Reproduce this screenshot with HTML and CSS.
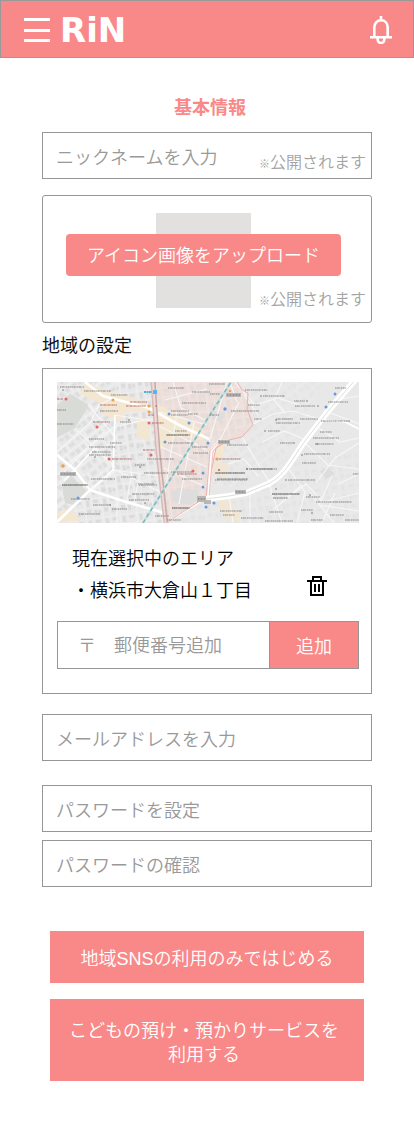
FILE: index.html
```html
<!DOCTYPE html>
<html lang="ja">
<head>
<meta charset="utf-8">
<meta name="viewport" content="width=device-width, initial-scale=1">
<title>RiN 基本情報</title>
<link rel="stylesheet" href="styles.css">
</head>
<body>
<header class="header">
  <div class="header-left">
    <button class="icon-button" type="button" aria-label="メニュー">
      <svg width="26" height="24" viewBox="0 0 26 24" fill="#fff"><path d="M0 0h26v3H0zM0 11h26v3H0zM0 21h26v3H0z"/></svg>
    </button>
    <a class="logo" href="#">RiN</a>
  </div>
  <button class="icon-button" type="button" aria-label="お知らせ">
    <svg width="22" height="28" viewBox="0 0 22 28" fill="none" stroke="#fff" stroke-width="2.6"><path d="M11 0v4M4.3 20.5v-9c0-4.2 2.8-7.2 6.7-7.2s6.7 3 6.7 7.2v9M0 21.3h22M7.7 22v1.7a3.3 3.3 0 0 0 6.6 0V22"/></svg>
  </button>
</header>
<main class="main">
  <h1 class="title">基本情報</h1>
  <form class="form">
    <div class="field">
      <input class="input" type="text" aria-label="ニックネーム" placeholder="ニックネームを入力">
      <span class="note"><span class="mark">※</span>公開されます</span>
    </div>
    <div class="upload">
      <div class="avatar"></div>
      <button class="upload-button" type="button">アイコン画像をアップロード</button>
      <span class="note upload-note"><span class="mark">※</span>公開されます</span>
    </div>
    <h2 class="subtitle">地域の設定</h2>
    <section class="area">
      <svg class="map" viewBox="0 0 302 141" preserveAspectRatio="xMidYMid slice" role="img" aria-label="大倉山周辺の地図">
        <defs>
          <pattern id="blocksA" width="22" height="18" patternUnits="userSpaceOnUse" patternTransform="rotate(-38)">
            <path d="M0 0h22M0 9h22M0 0v18M12 0v9M7 9v9" stroke="#f4f4f4" stroke-width="1" fill="none"/>
            <path d="M2 2h3v3H2zM7 2h3v5H7zM14 3h6v3h-6zM1 11h4v4H1zM10 11h4v3h-4zM16 11h4v5h-4z" fill="#dedede"/>
          </pattern>
          <pattern id="blocksB" width="17" height="20" patternUnits="userSpaceOnUse" patternTransform="rotate(-8)">
            <path d="M0 0h17M0 10h10M0 0v20M10 0v20" stroke="#f4f2f1" stroke-width="1" fill="none"/>
            <path d="M2 2h5v3H2zM12 2h3v6h-3zM2 12h3v5H2zM6 13h3v3H6zM12 11h4v4h-4z" fill="#dbdbdb"/>
          </pattern>
        </defs>
        <path fill="#e8e8e8" d="M0 0h302v141H0z"/>
        <path fill="url(#blocksA)" d="M0 0h60v90l-60 51z"/>
        <path fill="url(#blocksB)" d="M60 0h40l10 141H0l56-53z"/>
        <path fill="#eddeda" d="M94 0h86l12 14 4 28-12 14-14 2-10 8-10 50-39 25-10-50z"/>
        <path fill="url(#blocksB)" opacity=".5" d="M96 0h84l14 40-34 26-10 50-39 25z"/>
        <path fill="url(#blocksA)" opacity=".35" d="M186 0h80l-40 80-40 25h-30l5-40 30-12z"/>
        <path fill="url(#blocksB)" opacity=".3" d="M151 117l64-14 25-30h62v68H110z"/>
        <path fill="#f3e7d1" d="M29 0l18 8 30 8 16 6v8l-24-1-5 10-17-6-4-12-20-9zM96 20l22 11 30 18-3 10-24-5-19 14-4-22zM81 35l12 5v20l-14-6zM157 65l11-4-2 14-9 2zM0 130l14-3 10 12H2z"/>
        <path fill="#f1e6d4" d="M154 82l10-3 8 6-3 10-15-2zM160 118l16 2v12l-12-1zM170 127l14 3-2 10-17-4z"/>
        <path fill="#d9dbd7" d="M0 23l13-11 19 11-14 23-18 10zM5 104l9-10 17 16-13 13-10-2z"/>
        <path fill="#dddddd" d="M114 111l7-5 20 2 2 8-10 7-16-3zM158 29l10 4-4 7-9-3zM263 89l8-4 7 7-9 5z"/>
        <g fill="none" stroke="#f6f6f6" stroke-width="1.2">
          <path d="M0 70l33-29 9-18 14-7M13 80l44-35 36-8M20 48l38 37M31 23l26 30M56 88l47 6M58 33l44 7M36 107l23-19 44 22M60 117v24M75 90l-6 33M83 92l-7 34M7 90L47 50M34 64l20 17"/>
          <path d="M103 30l47 13M102 44l48 24M104 65l46 20M107 86l42 19M120 30l-12 80M137 40l-15 82M170 0l-18 60M182 20l-20 40M158 62l-7 53M116 0l8 26 24 12M108 18l42-11"/>
          <path d="M185 55l13 22 15 24M196 42l20-10 20-3 26 8M178 0l20 23 23-7 24 8M205 60l22-11 25 10M187 13l14 20M225 0l-8 18 11 13M171 82l16-5 14 17M173 0l7 20M172 113l4 28M193 109v32M212 102l13 39"/>
          <path d="M231 86l17 24-8 31M248 61l23 22 31 4M260 45l23 15 19-4M271 30l31 12M284 17l18-3M225 120l24-18 17 18 36-9M251 108l26 33M275 94l-13 29 40 6M217 127l28-24M265 141l13-30M281 102l21-10M302 61l-24 15-19 25"/>
        </g>
        <g fill="none" stroke="#fff" stroke-linejoin="round">
          <path stroke-width="2.6" d="M28 0l18 14 46 12 30 17 30 14M0 73l17 14 16 21 30 10 44 13 2 10M0 140l33-32"/>
          <path stroke-width="1.6" d="M33 108l23-20 2-55M7 99l30-32M109 141l42-26M248 60l16-22 24 2 14 7"/>
        </g>
        <g fill="none">
          <path stroke="#d8bbb8" stroke-width="5" d="M96 0l5 70 8 71"/>
          <path stroke="#eedbd9" stroke-width="2" d="M96 0l5 70 8 71"/>
          <path stroke="#b99f9e" stroke-width=".7" d="M98 0l5 72 7 69"/>
          <path stroke="#edb1af" stroke-width="1" d="M180 0l5 8 6 3-1 16 6 16-11 12-13 3-13 8-10 49-40 26"/>
          <path stroke="#fff" stroke-width="2.4" d="M163 58l-8 9-4 49"/>
          <path stroke="#edb1af" stroke-width=".8" d="M161 60l-8 9-4 49M164 62l-8 7-4 46"/>
          <path stroke="#c3dcde" stroke-width="2" d="M86 141l43-69 22-36 23-36"/>
          <path stroke="#7fb9c0" stroke-width="1.6" stroke-dasharray="4 3" d="M86 141l43-69 22-36 23-36"/>
          <path stroke="#fff" stroke-width="6" d="M148 117l24-3 17-3 22-9c18-9 25-27 37-43l24-31 27-31"/>
          <path stroke="#d5d5cd" stroke-width=".8" d="M148 117l24-3 17-3 22-9c18-9 25-27 37-43l24-31 27-31"/>
        </g>
        <g fill="none" stroke="#8c8c8c" stroke-width="1.4" stroke-dasharray="1.4 .5 2 .4 .8 .6" opacity=".7">
          <path d="M3 5h24M27 9h27M54 13h17M0 28h9M0 42h17M43 29h18M63 40h11M32 57h15M53 61h12M32 65h26M35 70h19M32 73h22M78 83h10M87 91h24M34 97h24M64 95h15M81 102h16M77 112h20M72 118h20M5 103h26M14 117h19M36 123h18M22 132h21M55 127h15M90 77h27M82 103h18"/>
          <path d="M111 6h16M135 10h18M125 21h24M114 29h18M114 33h17M131 32h10M109 53h24M111 61h25M135 65h16M136 71h15M118 49h12M114 90h22M125 97h20M115 126h18M98 134h14M110 138h14M152 2h16M153 12h10M174 29h28M153 33h9"/>
          <path d="M188 8h23M206 14h22M191 23h12M237 19h11M238 24h20M278 6h11M271 20h20M219 37h14M219 41h24M211 49h12M197 37h8M225 37h11M243 37h18M264 39h27M263 50h12M256 56h26M223 61h13M258 62h19M247 72h26M245 81h14M170 63h21M159 91h29M194 87h26M158 98h32M231 98h27M215 112h28M249 115h14M259 120h34M276 120h19M212 130h14M208 139h28M163 129h22M166 133h12M244 128h12M273 133h14M288 138h14M184 136h23M254 138h12M296 92h6"/>
        </g>
        <g fill="none" stroke="#707070" stroke-width="1.4" stroke-dasharray="1.7 .4 1 .5" opacity=".65">
          <path d="M110 53h22M5 103h25M115 126h17M158 91h30M160 97h31M192 87h24M215 112h27M216 116h15"/>
        </g>
        <g fill="none" stroke="#b77a78" stroke-width="1.4" stroke-dasharray="2 .5 1 .4" opacity=".75">
          <path d="M36 40h17M73 20h17M69 24h20M95 41h12M86 68h12M55 77h20M120 92h20M162 77h22M0 17h6M43 23h17M91 33h6"/>
        </g>
        <g fill="#b8b7b5"><path d="M3 90h16v4H3zM169 11h15v4h-15zM161 58h12v4h-12zM178 108h11v4h-11zM147 118h7v4h-7zM140 114h9v6h-9z"/></g>
        <g stroke="#777" stroke-width="1.2" stroke-dasharray="1 .5"><path d="M4 92h14M170 13h13M162 60h10M179 110h9M141 117h7"/></g>
        <g fill="#e86661"><circle cx="9" cy="17" r="1.5"/><circle cx="40" cy="45" r="1.5"/><circle cx="92" cy="41" r="1.5"/><circle cx="94" cy="73" r="1.5"/><circle cx="52" cy="77" r="1.5"/><circle cx="136" cy="89" r="1.5"/></g>
        <g fill="#eba34c"><circle cx="56" cy="18" r="1.6"/><circle cx="92" cy="24" r="1.6"/><circle cx="92" cy="30" r="1.5"/><circle cx="160" cy="77" r="1.6"/><circle cx="173" cy="9" r="1.3"/><circle cx="6" cy="84" r="1.8"/></g>
        <g fill="#6698de"><circle cx="112" cy="32" r="1.5"/><circle cx="132" cy="41" r="1.5"/><circle cx="108" cy="60" r="1.5"/><circle cx="168" cy="27" r="1.7"/><circle cx="278" cy="12" r="1.5"/><circle cx="269" cy="25" r="1.5"/><circle cx="146" cy="91" r="1.5"/><circle cx="146" cy="105" r="1.5"/><circle cx="21" cy="116" r="1.5"/><circle cx="149" cy="125" r="1.5"/><circle cx="157" cy="121" r="1.5"/><circle cx="151" cy="61" r="1.5"/></g>
        <path fill="#5ab4ea" d="M96 8h4v4h-4z"/>
        <path stroke="#5badd5" stroke-width="2" stroke-dasharray="2 .5" d="M87 10h8"/>
        <g fill="#9a6a6a"><circle cx="6" cy="8" r=".8"/><circle cx="72" cy="38" r=".8"/><circle cx="38" cy="75" r=".8"/><circle cx="83" cy="85" r=".8"/><circle cx="88" cy="121" r=".8"/><circle cx="76" cy="112" r=".8"/><circle cx="53" cy="123" r=".8"/><circle cx="99" cy="24" r=".8"/><circle cx="204" cy="14" r=".8"/><circle cx="219" cy="38" r=".8"/><circle cx="208" cy="49" r=".8"/><circle cx="237" cy="61" r=".8"/><circle cx="245" cy="73" r=".8"/><circle cx="260" cy="62" r=".8"/><circle cx="292" cy="39" r=".8"/><circle cx="190" cy="87" r="1"/><circle cx="229" cy="98" r=".8"/><circle cx="219" cy="107" r=".8"/><circle cx="253" cy="113" r=".8"/><circle cx="255" cy="131" r=".8"/><circle cx="162" cy="88" r="1"/><circle cx="250" cy="19" r=".8"/><circle cx="261" cy="24" r=".8"/></g>
      </svg>
      <div class="selected">
        <h3 class="selected-title">現在選択中のエリア</h3>
        <div class="selected-row">
          <span>・横浜市大倉山１丁目</span>
          <button class="icon-button" type="button" aria-label="削除">
            <svg width="20" height="20" viewBox="0 0 20 20" fill="none" stroke="#000" stroke-width="2"><path d="M0 5h20M6 5V1h8v4M4 5v14h12V5M8 8v8M12 8v8"/></svg>
          </button>
        </div>
      </div>
      <div class="postal">
        <input class="input postal-input" type="text" aria-label="郵便番号" placeholder="〒　郵便番号追加">
        <button class="postal-button" type="button">追加</button>
      </div>
    </section>
    <div class="field field-email"><input class="input" type="email" aria-label="メールアドレス" placeholder="メールアドレスを入力"></div>
    <div class="field field-password"><input class="input" type="password" aria-label="パスワード" placeholder="パスワードを設定"></div>
    <div class="field field-confirm"><input class="input" type="password" aria-label="パスワードの確認" placeholder="パスワードの確認"></div>
    <div class="actions">
      <button class="action" type="submit">地域SNSの利用のみではじめる</button>
      <button class="action action-service" type="submit">こどもの預け・預かりサービスを<br>利用する</button>
    </div>
  </form>
</main>
</body>
</html>
```

FILE: styles.css
```css
* {
  box-sizing: border-box;
}

body {
  margin: 0;
  background: #fff;
  color: #111;
  font: 350 18px/24px "Liberation Sans", "Noto Sans CJK JP", sans-serif;
}

button,
input {
  font: inherit;
  border: 0;
  border-radius: 0;
  margin: 0;
  padding: 0;
}

button {
  cursor: pointer;
}

.header {
  display: flex;
  align-items: center;
  justify-content: space-between;
  height: 58px;
  padding: 2px 21px 0 23px;
  border: 1px solid #999;
  background: #f98988;
}

.header-left {
  display: flex;
  align-items: center;
  gap: 10px;
}

.icon-button {
  display: flex;
  background: none;
}

.logo {
  color: #fff;
  font-family: "DejaVu Sans", sans-serif;
  font-size: 34px;
  font-weight: 700;
  line-height: 40px;
  text-decoration: none;
}

.main {
  padding: 38px 42px 65px;
}

.title,
.subtitle,
.selected-title {
  margin: 0;
  font-size: 18px;
}

.title {
  margin-bottom: 12px;
  padding-left: 6px;
  color: #f98988;
  font-weight: 700;
  text-align: center;
}

.field {
  display: flex;
  height: 47px;
  border: 1px solid #959697;
}

.input {
  flex: 1;
  min-width: 0;
  padding: 5px 0 0 13px;
  background: none;
  color: #111;
}

.input::placeholder {
  color: #999;
  opacity: 1;
}

.note {
  align-self: flex-end;
  padding: 0 5px 2px 0;
  color: #a3a3a3;
  font-size: 16px;
  white-space: nowrap;
}

.mark {
  font-size: 11px;
}

.upload {
  position: relative;
  display: grid;
  align-items: center;
  margin-top: 16px;
  padding: 17px 30px 14px 23px;
  border: 1px solid #959697;
  border-radius: 3px;
}

.avatar,
.upload-button {
  grid-area: 1 / 1;
}

.avatar {
  justify-self: center;
  width: 95px;
  height: 95px;
  background: #e2e1df;
}

.upload-button {
  height: 42px;
  margin-bottom: 11px;
  padding-top: 2px;
  border-radius: 4px;
  background: #f98988;
  color: #fff;
}

.upload-note {
  position: absolute;
  right: 0;
  bottom: 7px;
}

.subtitle {
  margin: 11px 0 10px;
  font-weight: 400;
}

.area {
  padding: 13px 12px 24px 14px;
  border: 1px solid #959697;
}

.map {
  display: block;
  width: 100%;
  height: 141px;
}

.selected {
  padding: 20px 32px 14px 15px;
  color: #000;
  line-height: 32px;
}

.selected-title {
  font-weight: inherit;
}

.selected-row {
  display: flex;
  justify-content: space-between;
}

.selected-row .icon-button {
  align-self: flex-start;
  padding-top: 1px;
}

.postal {
  display: flex;
  height: 48px;
  border: 1px solid #959697;
}

.postal-input {
  padding: 2px 0 0 20px;
}

.postal-button {
  width: 89px;
  padding-top: 4px;
  border-left: 1px solid #959697;
  background: #f98988;
  color: #fff;
}

.field-email {
  margin-top: 20px;
}

.field-password {
  margin-top: 24px;
}

.field-confirm {
  margin-top: 8px;
}

.actions {
  display: grid;
  gap: 16px;
  margin-top: 44px;
  padding: 0 8px;
}

.action {
  padding: 16px 0 12px;
  background: #f98988;
  color: #fff;
}

.action-service {
  padding: 20px 6px 14px 0;
}
```
